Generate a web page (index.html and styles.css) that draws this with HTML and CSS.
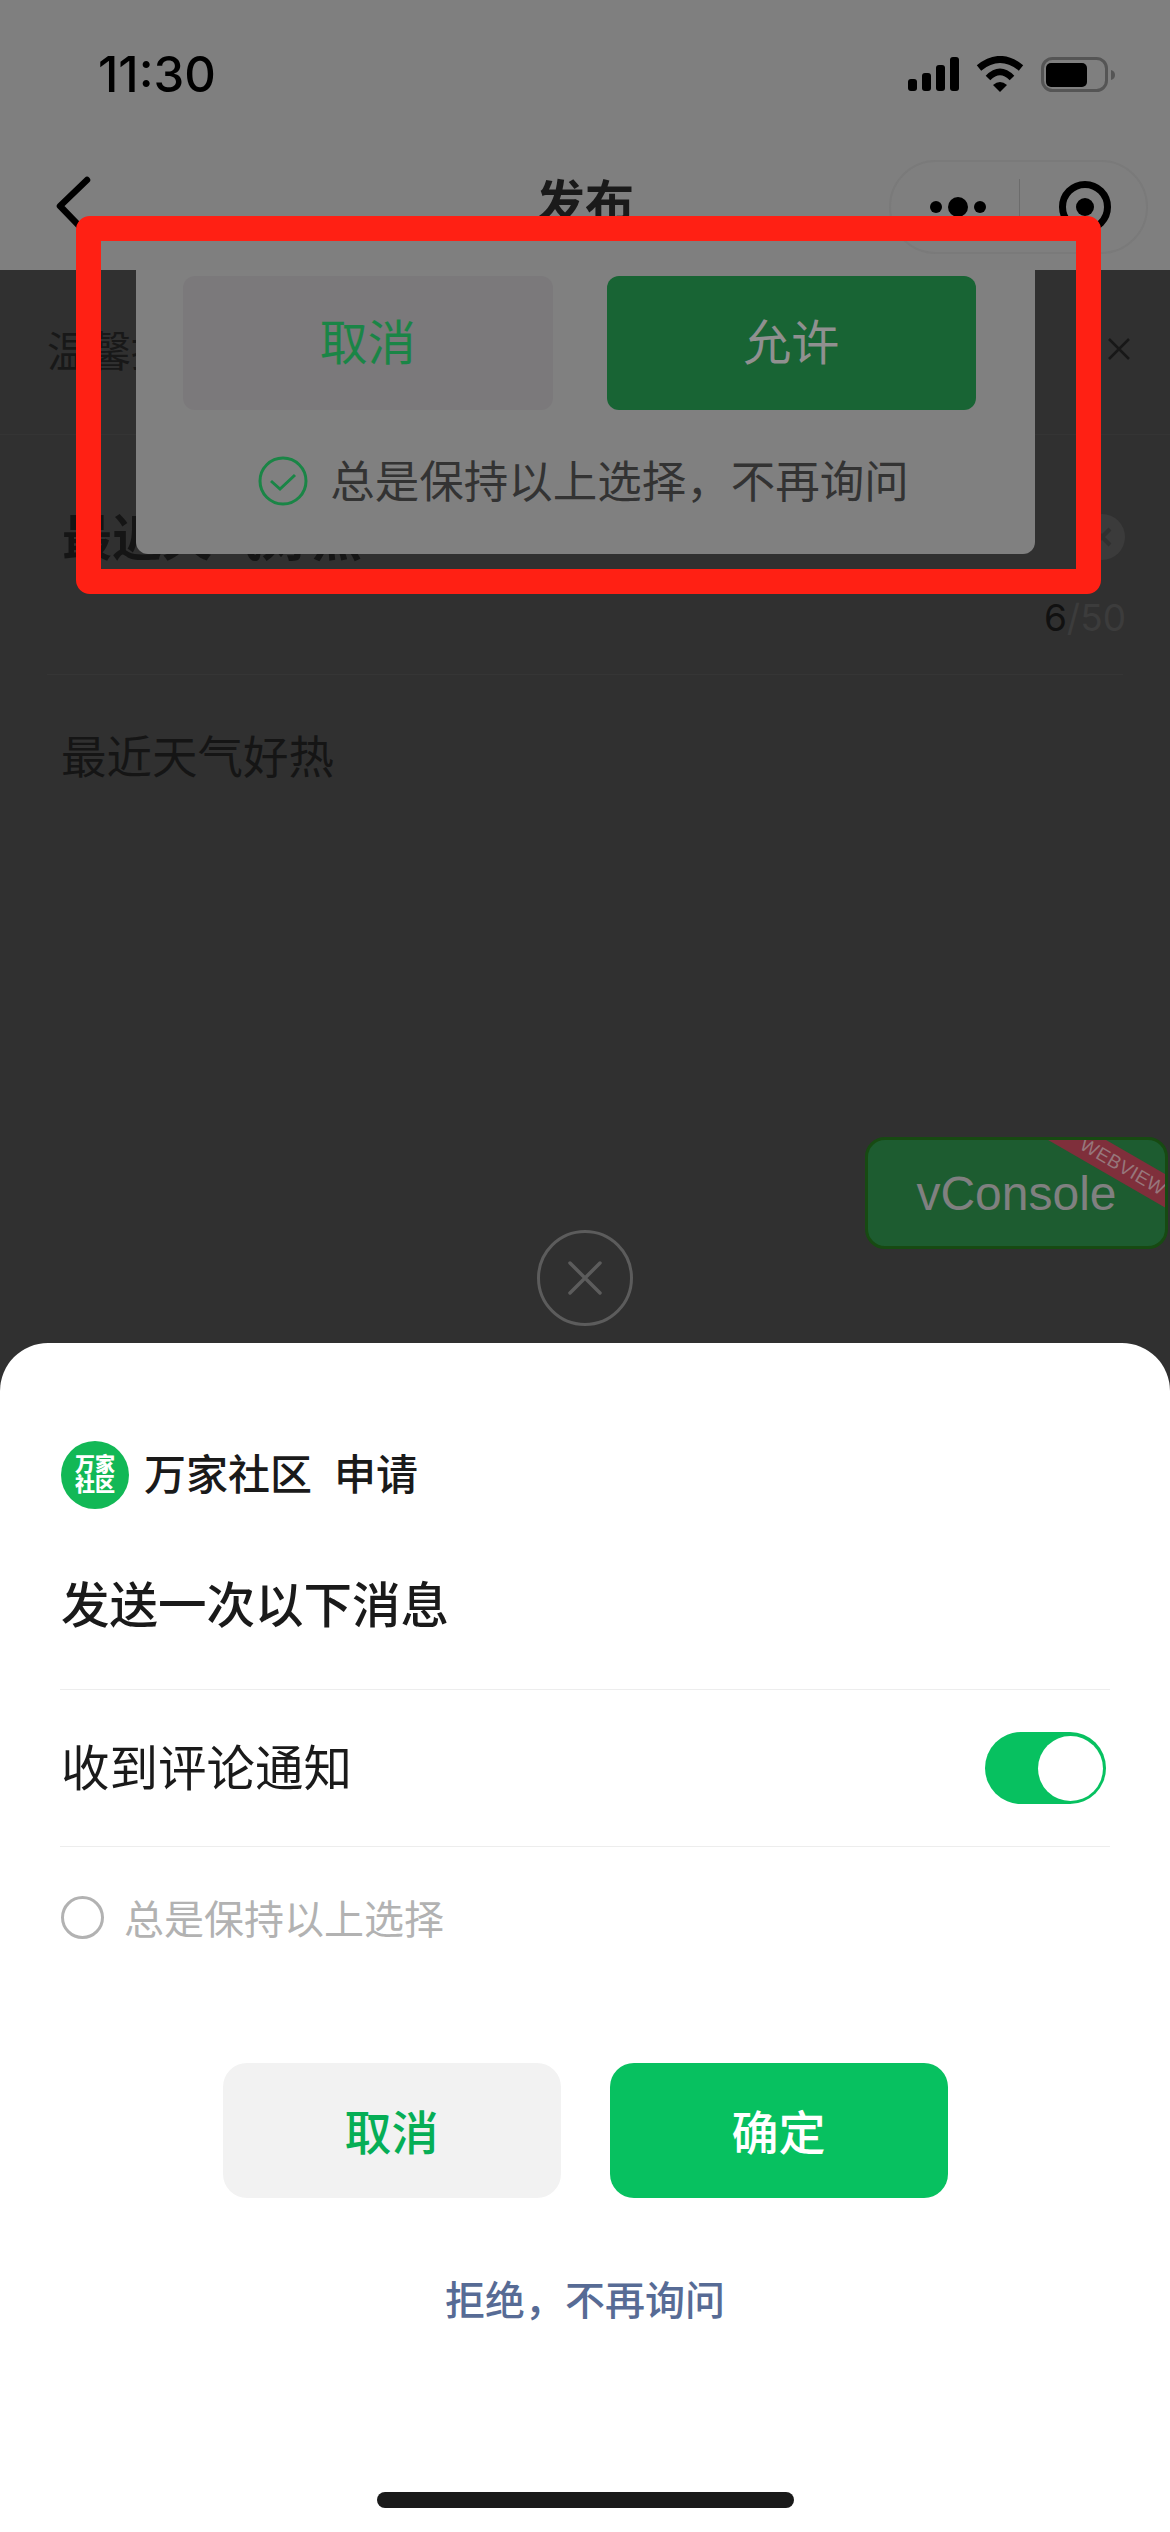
FILE: index.html
```html
<!DOCTYPE html>
<html lang="zh-CN">
<head>
  <meta charset="UTF-8">
  <meta name="viewport" content="width=device-width, initial-scale=1.0">
  <title>发布</title>
  <link rel="stylesheet" href="styles.css">
</head>
<body>
  <div class="page">
    <div class="top-area">
      <div class="status-bar">
        <span class="time">11:30</span>
        <div class="status-icons">
          <svg width="51" height="34" viewBox="0 0 51 34">
            <rect x="0" y="22" width="9" height="12" rx="3"/>
            <rect x="14" y="16" width="9" height="18" rx="3"/>
            <rect x="28" y="8" width="9" height="26" rx="3"/>
            <rect x="42" y="0" width="9" height="34" rx="3"/>
          </svg>
          <svg width="48" height="36" viewBox="0 0 48 36">
            <path d="M3 12Q24-5 45 12" fill="none" stroke="#000" stroke-width="7"/>
            <path d="M12 22Q24 10 36 22" fill="none" stroke="#000" stroke-width="6.5"/>
            <path d="M17 29Q24 23 31 29L24 36Z"/>
          </svg>
          <svg width="74" height="35" viewBox="0 0 74 35">
            <rect x="1.5" y="1.5" width="64" height="32" rx="10" fill="none" stroke="#555" stroke-width="3"/>
            <rect x="5" y="6" width="41" height="24" rx="5"/>
            <path d="M70 13Q74 14 74 18Q74 22 70 23Z" fill="#555"/>
          </svg>
        </div>
      </div>
      <div class="nav-bar">
        <svg class="back" width="36" height="62" viewBox="0 0 36 62">
          <path d="M32 4L5 30L32 58" fill="none" stroke="#000" stroke-width="6.5" stroke-linecap="round" stroke-linejoin="round"/>
        </svg>
        <div class="nav-title">发布</div>
        <div class="capsule">
          <div class="capsule-dots">
            <span class="dot"></span>
            <span class="dot big"></span>
            <span class="dot"></span>
          </div>
          <div class="capsule-line"></div>
          <div class="capsule-target"><span></span></div>
        </div>
      </div>
    </div>

    <div class="notice">
      <span class="notice-text">温馨提示：</span>
      <svg width="24" height="24" viewBox="0 0 24 24">
        <path d="M2 2L22 22M22 2L2 22" stroke="#181818" stroke-width="2.5"/>
      </svg>
    </div>
    <div class="form-area">
      <div class="title-row">
        <span class="title-text">最近天气好热</span>
        <svg class="clear-btn" width="46" height="46" viewBox="0 0 46 46">
          <circle cx="23" cy="23" r="23" fill="#3b3b3b"/>
          <path d="M15 15L31 31M31 15L15 31" stroke="#303030" stroke-width="4"/>
        </svg>
      </div>
      <div class="counter"><b>6</b>/50</div>
    </div>
    <div class="body-text">最近天气好热</div>

    <!-- 授权弹窗，上半部分被盖住了 -->
    <div class="perm-card">
      <div class="perm-buttons">
        <div class="perm-btn perm-cancel">取消</div>
        <div class="perm-btn perm-allow">允许</div>
      </div>
      <div class="perm-check">
        <svg width="50" height="50" viewBox="0 0 50 50">
          <circle cx="25" cy="25" r="23" fill="none" stroke="#1a8546" stroke-width="3"/>
          <path d="M13 25L22 33L37 19" fill="none" stroke="#1a8546" stroke-width="3"/>
        </svg>
        <span class="perm-check-text">总是保持以上选择，不再询问</span>
      </div>
    </div>
    <div class="red-box"></div>

    <div class="vconsole">
      <div class="ribbon">WEBVIEW</div>
      vConsole
    </div>

    <div class="sheet-close">
      <svg width="98" height="98" viewBox="0 0 98 98">
        <circle cx="49" cy="49" r="46.5" fill="none" stroke="#5c5c5c" stroke-width="3"/>
        <path d="M34 34L64 64M64 34L34 64" stroke="#5c5c5c" stroke-width="3.5" stroke-linecap="round"/>
      </svg>
    </div>

    <div class="sheet">
      <div class="app-row">
        <div class="app-logo">万家<br>社区</div>
        <span class="app-name">万家社区</span>
        <span class="app-name app-apply">申请</span>
      </div>
      <div class="sheet-title">发送一次以下消息</div>
      <div class="option-row">
        <span class="option-text">收到评论通知</span>
        <div class="toggle"><span></span></div>
      </div>
      <div class="remember-row">
        <span class="radio"></span>
        <span>总是保持以上选择</span>
      </div>
      <div class="sheet-buttons">
        <div class="sheet-btn sheet-cancel">取消</div>
        <div class="sheet-btn sheet-ok">确定</div>
      </div>
      <div class="reject">拒绝，不再询问</div>
      <div class="home-bar"></div>
    </div>
  </div>
</body>
</html>
```
FILE: styles.css
```css
* {
  box-sizing: border-box;
}

body {
  margin: 0;
  font-family: "Noto Sans CJK SC", "Liberation Sans", sans-serif;
}

.page {
  position: relative;
  width: 1170px;
  height: 2532px;
  overflow: hidden;
  background-color: #303030;
}

/* top bars */
.top-area {
  height: 270px;
  background-color: #7f7f7f;
}

.status-bar {
  display: flex;
  justify-content: space-between;
  align-items: center;
  height: 148px;
  padding: 0 55px 0 98px;
}

.time {
  font-family: Inter, "Liberation Sans", sans-serif;
  font-size: 49px;
  font-weight: 500;
  color: #000;
}

.status-icons {
  display: flex;
  align-items: center;
  gap: 17px;
}

.nav-bar {
  display: grid;
  grid-template-columns: 1fr auto 1fr;
  align-items: center;
  height: 118px;
  padding: 0 22px;
}

.back {
  margin-left: 33px;
}

.nav-title {
  margin-bottom: 14px;
  font-size: 49px;
  font-weight: 700;
  line-height: 60px;
  color: #1a1a1a;
}

.capsule {
  display: flex;
  align-items: center;
  justify-self: end;
  width: 259px;
  height: 94px;
  border: 2px solid #7a7a7a;
  border-radius: 47px;
}

.capsule-dots {
  display: flex;
  align-items: center;
  justify-content: center;
  gap: 6px;
  width: 128px;
  padding-left: 6px;
}

.dot {
  width: 12px;
  height: 12px;
  border-radius: 50%;
  background-color: #000;
}

.dot.big {
  width: 20px;
  height: 20px;
}

.capsule-line {
  width: 1px;
  height: 56px;
  background-color: #6c6c6c;
}

.capsule-target {
  display: flex;
  align-items: center;
  justify-content: center;
  width: 52px;
  height: 52px;
  margin-left: 39px;
  border: 7px solid #000;
  border-radius: 50%;
}

.capsule-target span {
  width: 18px;
  height: 18px;
  border-radius: 50%;
  background-color: #000;
}

/* page content under the mask */
.notice {
  display: flex;
  justify-content: space-between;
  align-items: center;
  height: 165px;
  padding: 0 39px 0 47px;
  border-bottom: 1px solid #343434;
  font-size: 42px;
  color: #181818;
}

.notice-text {
  padding-bottom: 8px;
}

.notice svg {
  margin-bottom: 6px;
}

.form-area {
  height: 240px;
  margin: 0 47px;
  padding: 66px 0 0 15px;
  border-bottom: 1px solid #353535;
}

.title-row {
  display: flex;
  justify-content: space-between;
  align-items: center;
  height: 66px;
}

.title-text {
  font-size: 50px;
  font-weight: 700;
  color: #151515;
}

.clear-btn {
  margin-right: -2px;
  margin-top: 6px;
}

.counter {
  margin-top: 30px;
  margin-right: -3px;
  text-align: right;
  font-family: Inter, "Liberation Sans", sans-serif;
  font-size: 37px;
  line-height: 42px;
  color: #3c3c3c;
}

.counter b {
  font-weight: 400;
  color: #111;
}

.body-text {
  margin-top: 49px;
  padding-left: 61px;
  font-size: 45.5px;
  line-height: 60px;
  color: #151515;
}

/* permission card */
.perm-card {
  position: absolute;
  left: 136px;
  top: 270px;
  width: 899px;
  height: 284px;
  padding: 6px 59px 0 47px;
  border-radius: 0 0 12px 12px;
  background-color: #808080;
}

.perm-buttons {
  display: flex;
  gap: 54px;
}

.perm-btn {
  display: flex;
  align-items: center;
  justify-content: center;
  width: 370px;
  height: 134px;
  padding-bottom: 8px;
  border-radius: 12px;
  font-size: 48px;
}

.perm-cancel {
  background-color: #7b797b;
  color: #1a8546;
}

.perm-allow {
  background-color: #186434;
  color: #909090;
}

.perm-check {
  display: flex;
  align-items: center;
  justify-content: center;
  gap: 22px;
  margin-top: 46px;
  padding-left: 8px;
  height: 50px;
  font-size: 44.5px;
  color: #333;
}

.perm-check-text {
  padding-bottom: 6px;
}

.red-box {
  position: absolute;
  left: 76px;
  top: 216px;
  width: 1025px;
  height: 378px;
  border: 25px solid #ff2014;
  border-radius: 14px;
}

/* vConsole floating button */
.vconsole {
  position: absolute;
  left: 865px;
  top: 1137px;
  display: flex;
  align-items: center;
  justify-content: center;
  width: 303px;
  height: 112px;
  overflow: hidden;
  border: 3px solid #174a12;
  border-radius: 20px;
  background-color: #1d5c30;
  font-family: "Liberation Sans", sans-serif;
  font-size: 48px;
  color: #808080;
}

.ribbon {
  position: absolute;
  left: 145px;
  top: 12px;
  width: 220px;
  height: 29px;
  transform: rotate(30deg);
  background-color: #7f2f3b;
  font-size: 19px;
  line-height: 29px;
  letter-spacing: 0.5px;
  text-align: center;
  color: #97777c;
}

.sheet-close {
  position: absolute;
  left: 536px;
  top: 1229px;
  height: 98px;
}

/* bottom sheet */
.sheet {
  position: absolute;
  left: 0;
  right: 0;
  top: 1343px;
  height: 1189px;
  padding: 98px 60px 0;
  border-radius: 48px 48px 0 0;
  background-color: #fff;
  color: #1a1a1a;
}

.app-row {
  display: flex;
  align-items: center;
  height: 68px;
  padding-left: 1px;
  font-size: 42px;
  font-weight: 500;
}

.app-logo {
  width: 68px;
  height: 68px;
  margin-right: 15px;
  padding-top: 13px;
  border-radius: 50%;
  background-color: #12b856;
  font-size: 20px;
  font-weight: 900;
  line-height: 20px;
  text-align: center;
  color: #fff;
}

.app-name {
  padding-bottom: 8px;
}

.app-apply {
  margin-left: 22px;
}

.sheet-title {
  margin-top: 69px;
  padding: 0 0 63px 1px;
  border-bottom: 1px solid #ededed;
  font-size: 48.5px;
  font-weight: 500;
  line-height: 48px;
}

.option-row {
  display: flex;
  justify-content: space-between;
  align-items: center;
  height: 157px;
  padding: 0 4px 0 1px;
  border-bottom: 1px solid #ededed;
  font-size: 48.5px;
}

.option-text {
  padding-bottom: 6px;
}

.toggle {
  display: flex;
  align-items: center;
  justify-content: flex-end;
  width: 121px;
  height: 72px;
  padding-right: 3px;
  border-radius: 36px;
  background-color: #07c160;
}

.toggle span {
  width: 65px;
  height: 65px;
  border-radius: 50%;
  background-color: #fff;
}

.remember-row {
  display: flex;
  align-items: center;
  gap: 20px;
  height: 140px;
  padding-left: 1px;
  font-size: 40px;
  color: #b2b2b2;
}

.radio {
  width: 43px;
  height: 43px;
  border: 3px solid #b2b2b2;
  border-radius: 50%;
}

.sheet-buttons {
  display: flex;
  justify-content: center;
  gap: 49px;
  margin-top: 76px;
}

.sheet-btn {
  display: flex;
  align-items: center;
  justify-content: center;
  width: 338px;
  height: 135px;
  padding-bottom: 2px;
  border-radius: 24px;
  font-size: 47px;
  font-weight: 500;
}

.sheet-cancel {
  background-color: #f2f2f2;
  color: #06ae56;
}

.sheet-ok {
  background-color: #07c160;
  color: #fff;
}

.reject {
  margin-top: 71px;
  font-size: 40px;
  font-weight: 500;
  line-height: 58px;
  text-align: center;
  color: #576b95;
}

.home-bar {
  width: 417px;
  height: 16px;
  margin: 165px auto 0;
  border-radius: 8px;
  background-color: #1a1a1a;
}
```
